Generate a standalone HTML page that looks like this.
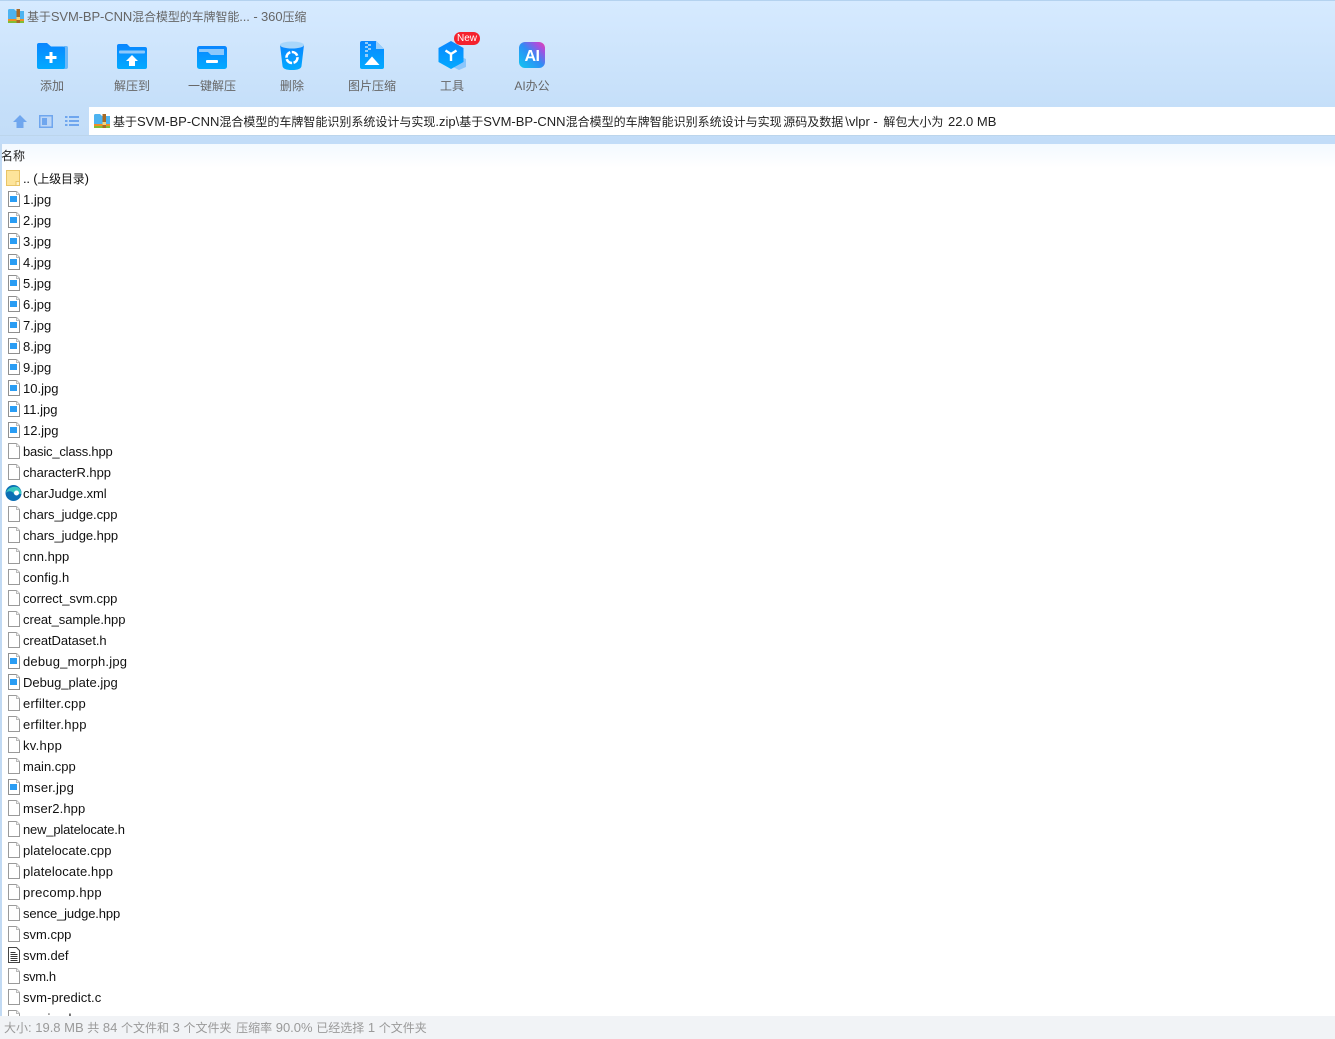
<!DOCTYPE html>
<html lang="zh-CN"><head><meta charset="utf-8"><title>360压缩</title>
<style>
html,body{margin:0;padding:0;width:1335px;height:1039px;overflow:hidden;background:#fff}
body{position:relative;font-family:"Liberation Sans","Noto Sans CJK SC",sans-serif;font-size:13px;color:#222}
.a{position:absolute;white-space:nowrap}
u{text-decoration:none;font-size:12px}
#top{left:0;top:0;width:1335px;height:144px;background:linear-gradient(#d6eaff 0,#c5dff9 106px,#c2dcf8 144px);border-top:1px solid #b4d2ef;box-sizing:border-box}
#bar{left:0;top:135px;width:1335px;height:1px;background:#bcd5ec}
#addr{left:89px;top:107px;width:1246px;height:28px;background:#fff}
#list{left:0;top:144px;width:1335px;height:24px;background:linear-gradient(#f3f9ff,#fff)}
#edge{left:0;top:144px;width:1.5px;height:872px;background:#c2daf3}
#status{left:0;top:1016px;width:1335px;height:23px;background:#f1f3f6}
#status span{position:absolute;left:4px;top:3px;color:#9a9a9a;line-height:17px;white-space:nowrap}
.lb{width:80px;text-align:center;top:77px;line-height:18px;color:#666;font-size:12px}
.r{position:absolute;left:23px;line-height:18px;white-space:nowrap;color:#111}
svg.i{position:absolute;left:7px;width:13px;height:16px}
svg.t{position:absolute;overflow:visible}
</style></head><body>
<svg width="0" height="0" style="position:absolute">
<defs>
<linearGradient id="b" x1="0" y1="0" x2="0" y2="1"><stop offset="0" stop-color="#0a86ff"/><stop offset="1" stop-color="#02aaff"/></linearGradient>
<g id="zip"><path d="M0 1.500Q0 0 1.500 0H6L8 2H16V12H0Z" fill="#4db3f0"/><rect y="10" width="16" height="2.200" fill="#f08f24"/><rect y="12" width="16" height="2" fill="#82bd35"/><rect x="8.500" y="0" width="3.500" height="14" fill="#a86a25"/><rect x="8.500" y="8" width="3.500" height="3" fill="#f5d27a"/></g>
<g id="f"><path d="M1.500.5H9.500L12.500 3.500V15.500H1.500Z" fill="#fff" stroke="#9a9a9a"/><path d="M9.500.5V3.500H12.500" fill="#f2f2f2" stroke="#bbb"/></g>
<g id="p"><path d="M1.500.5H9.500L12.500 3.500V15.500H1.500Z" fill="#fff" stroke="#8f8f8f"/><path d="M9.500.5V3.500H12.500" fill="#f2f2f2" stroke="#bbb"/><rect x="3" y="5" width="7" height="6" fill="#2a9df4"/></g>
</defs></svg>
<div class="a" id="top"></div><div class="a" id="bar"></div><div class="a" id="addr"></div><div class="a" id="list"></div><div class="a" id="edge"></div>

<svg class="t" style="left:8px;top:9px" width="16" height="14"><use href="#zip"/></svg>
<div class="a" style="left:27px;top:8px;line-height:18px;color:#666;letter-spacing:-.1px"><u>基于</u>SVM-BP-CNN<u>混合模型的车牌智能</u>... - 360<u>压缩</u></div>

<svg class="t" style="left:37px;top:43px" width="32" height="27"><path d="M27 3H29.500Q31 3 31 5V24Q31 26 29 26H26Z" fill="#6cb8f8"/><path d="M0 2Q0 0 2 0H10L14 3.500H26Q28 3.500 28 5.500V24Q28 26 26 26H2Q0 26 0 24Z" fill="url(#b)"/><path d="M12.500 9H15.500V13H19.500V16H15.500V20H12.500V16H8.500V13H12.500Z" fill="#fff"/></svg>
<svg class="t" style="left:117px;top:44px" width="30" height="26"><path d="M0 2Q0 0 2 0H10L13 3H28Q30 3 30 5V23Q30 25 28 25H2Q0 25 0 23Z" fill="url(#b)"/><rect x="2" y="6.500" width="26" height="3" rx="1" fill="#8cc8fb"/><path d="M15 11L21 17H18V22H12V17H9Z" fill="#fff"/></svg>
<svg class="t" style="left:197px;top:46px" width="30" height="24"><rect width="30" height="23" rx="2.500" fill="url(#b)"/><path d="M2 3H27V9H14L11 6H2Z" fill="#8cc8fb"/><rect x="9" y="14" width="12" height="3" rx="1" fill="#fff"/></svg>
<svg class="t" style="left:280px;top:41px" width="24" height="30"><path d="M0 4Q12 8 24 4L21.500 25Q21 29 12 29Q3 29 2.500 25Z" fill="url(#b)"/><ellipse cx="12" cy="4" rx="12" ry="3.500" fill="#a9d7fb"/><circle cx="12" cy="16.500" r="5.500" fill="none" stroke="#fff" stroke-width="2.600" stroke-dasharray="7 1.500"/></svg>
<svg class="t" style="left:360px;top:41px" width="24" height="28"><path d="M2 0H16L24 8V26Q24 28 22 28H2Q0 28 0 26V2Q0 0 2 0Z" fill="url(#b)"/><path d="M16 0L24 8H16Z" fill="#9ccffa"/><path d="M5 1h3v2H5zM8 3h3v2H8zM5 5h3v2H5zM8 7h3v2H8zM5 9h3v2H5zM5 13h3v3H5z" fill="#93cdfb"/><path d="M4.500 24L12 15.500L19.500 24Z" fill="#fff"/></svg>
<svg class="t" style="left:438px;top:41px" width="30" height="30"><path d="M21 15L28 18V26L21 29L15 26V18Z" fill="#8cc6fb"/><path d="M13 0L25.500 7V21L13 28L.5 21V7Z" fill="url(#b)"/><path d="M7.500 9.500L13 13L18.500 9.500M13 13V20" fill="none" stroke="#fff" stroke-width="2.400"/></svg>
<div class="a" style="left:454px;top:32px;width:26px;height:13px;border-radius:7px;background:#f5222d;color:#fff;font-size:10px;line-height:13px;text-align:center">New</div>
<svg class="t" style="left:519px;top:42px" width="26" height="26"><defs><linearGradient id="ai" x1="0" y1="1" x2="1" y2="0"><stop offset="0" stop-color="#10c8f0"/><stop offset=".5" stop-color="#2e8df5"/><stop offset=".8" stop-color="#a550e0"/><stop offset="1" stop-color="#f03fa5"/></linearGradient></defs><rect width="26" height="26" rx="6" fill="url(#ai)"/><text x="13" y="19" text-anchor="middle" fill="#fff" font-family="Liberation Sans" font-weight="bold" font-size="16" letter-spacing="-0.500">AI</text></svg>

<div class="a lb" style="left:12px">添加</div>
<div class="a lb" style="left:92px">解压到</div>
<div class="a lb" style="left:172px">一键解压</div>
<div class="a lb" style="left:252px">删除</div>
<div class="a lb" style="left:332px">图片压缩</div>
<div class="a lb" style="left:412px">工具</div>
<div class="a lb" style="left:492px">AI办公</div>

<svg class="t" style="left:13px;top:115px" width="14" height="13"><path d="M7 0L14 7H10.500V13H3.500V7H0Z" fill="#6fa6ee"/></svg>
<svg class="t" style="left:39px;top:115px" width="14" height="13"><rect x=".75" y=".75" width="12.500" height="11.500" fill="#bcd6f6" stroke="#6fa6ee" stroke-width="1.500"/><rect x="3" y="3" width="5" height="7" fill="#6fa6ee"/></svg>
<svg class="t" style="left:65px;top:116px" width="14" height="10"><path d="M0 0h2.500v2H0zM4 0h10v2H4zM0 4h2.500v2H0zM4 4h10v2H4zM0 8h2.500v2H0zM4 8h10v2H4z" fill="#6fa6ee"/></svg>

<svg class="t" style="left:94px;top:114px" width="16" height="14"><use href="#zip"/></svg>
<div class="a" style="left:113px;top:113px;line-height:18px;color:#222"><u>基于</u>SVM-BP-CNN<u>混合模型的车牌智能识别系统设计与实现</u>.zip\<u>基于</u>SVM-BP-CNN<u>混合模型的车牌智能识别系统设计与实现</u> <u style="margin-left:-2px">源码及数据</u><span style="margin-left:2px">\vlpr</span> - <u style="margin-left:2px">解包大小为</u><span style="margin-left:1px"> 22.0 MB</span></div>

<div class="a" style="left:1px;top:147px;line-height:18px;color:#222;font-size:12px">名称</div>

<div style="position:absolute;left:0;top:0;width:1335px;height:1016px;overflow:hidden">
<svg class="i" style="top:170px;left:6px;width:14px" viewBox="0 0 14 16"><path d="M.5.500H13.500V15.500H.5Z" fill="#fde49a" stroke="#e9c466"/><path d="M10 11.500H13.500V15.500H10Z" fill="#fff3c8" stroke="#e9c466"/></svg><div class="r" style="top:170px;letter-spacing:-.2px">.. (<u>上级目录</u>)</div>
<svg class="i" style="top:191px"><use href="#p"/></svg><div class="r" style="top:191px">1.jpg</div>
<svg class="i" style="top:212px"><use href="#p"/></svg><div class="r" style="top:212px">2.jpg</div>
<svg class="i" style="top:233px"><use href="#p"/></svg><div class="r" style="top:233px">3.jpg</div>
<svg class="i" style="top:254px"><use href="#p"/></svg><div class="r" style="top:254px">4.jpg</div>
<svg class="i" style="top:275px"><use href="#p"/></svg><div class="r" style="top:275px">5.jpg</div>
<svg class="i" style="top:296px"><use href="#p"/></svg><div class="r" style="top:296px">6.jpg</div>
<svg class="i" style="top:317px"><use href="#p"/></svg><div class="r" style="top:317px">7.jpg</div>
<svg class="i" style="top:338px"><use href="#p"/></svg><div class="r" style="top:338px">8.jpg</div>
<svg class="i" style="top:359px"><use href="#p"/></svg><div class="r" style="top:359px">9.jpg</div>
<svg class="i" style="top:380px"><use href="#p"/></svg><div class="r" style="top:380px">10.jpg</div>
<svg class="i" style="top:401px"><use href="#p"/></svg><div class="r" style="top:401px">11.jpg</div>
<svg class="i" style="top:422px"><use href="#p"/></svg><div class="r" style="top:422px">12.jpg</div>
<svg class="i" style="top:443px"><use href="#f"/></svg><div class="r" style="top:443px;letter-spacing:-.2px">basic_class.hpp</div>
<svg class="i" style="top:464px"><use href="#f"/></svg><div class="r" style="top:464px;letter-spacing:-.07px">characterR.hpp</div>
<svg class="i" style="top:485px;left:5px;width:17px" viewBox="0 0 17 16"><circle cx="8.500" cy="8" r="8" fill="#0c6fb5"/><path d="M1 8C2 3 9 0 14 3C16 5 16.500 7 16.500 9H9C8 6 3 5 1 8Z" fill="#38c6c0"/><path d="M7 9C7 12 11 14 15 12C14 9.500 16.500 9 16.500 9H9Z" fill="#0c6fb5"/><circle cx="11.500" cy="8" r="2.500" fill="#fff"/></svg><div class="r" style="top:485px;letter-spacing:-.07px">charJudge.xml</div>
<svg class="i" style="top:506px"><use href="#f"/></svg><div class="r" style="top:506px;letter-spacing:-.07px">chars_judge.cpp</div>
<svg class="i" style="top:527px"><use href="#f"/></svg><div class="r" style="top:527px;letter-spacing:-.07px">chars_judge.hpp</div>
<svg class="i" style="top:548px"><use href="#f"/></svg><div class="r" style="top:548px">cnn.hpp</div>
<svg class="i" style="top:569px"><use href="#f"/></svg><div class="r" style="top:569px;letter-spacing:.1px">config.h</div>
<svg class="i" style="top:590px"><use href="#f"/></svg><div class="r" style="top:590px;letter-spacing:-.07px">correct_svm.cpp</div>
<svg class="i" style="top:611px"><use href="#f"/></svg><div class="r" style="top:611px;letter-spacing:-.06px">creat_sample.hpp</div>
<svg class="i" style="top:632px"><use href="#f"/></svg><div class="r" style="top:632px;letter-spacing:-.07px">creatDataset.h</div>
<svg class="i" style="top:653px"><use href="#p"/></svg><div class="r" style="top:653px;letter-spacing:.2px">debug_morph.jpg</div>
<svg class="i" style="top:674px"><use href="#p"/></svg><div class="r" style="top:674px">Debug_plate.jpg</div>
<svg class="i" style="top:695px"><use href="#f"/></svg><div class="r" style="top:695px;letter-spacing:.25px">erfilter.cpp</div>
<svg class="i" style="top:716px"><use href="#f"/></svg><div class="r" style="top:716px;letter-spacing:.25px">erfilter.hpp</div>
<svg class="i" style="top:737px"><use href="#f"/></svg><div class="r" style="top:737px;letter-spacing:.3px">kv.hpp</div>
<svg class="i" style="top:758px"><use href="#f"/></svg><div class="r" style="top:758px">main.cpp</div>
<svg class="i" style="top:779px"><use href="#p"/></svg><div class="r" style="top:779px;letter-spacing:.25px">mser.jpg</div>
<svg class="i" style="top:800px"><use href="#f"/></svg><div class="r" style="top:800px;letter-spacing:.1px">mser2.hpp</div>
<svg class="i" style="top:821px"><use href="#f"/></svg><div class="r" style="top:821px;letter-spacing:-.18px">new_platelocate.h</div>
<svg class="i" style="top:842px"><use href="#f"/></svg><div class="r" style="top:842px;letter-spacing:.07px">platelocate.cpp</div>
<svg class="i" style="top:863px"><use href="#f"/></svg><div class="r" style="top:863px;letter-spacing:.13px">platelocate.hpp</div>
<svg class="i" style="top:884px"><use href="#f"/></svg><div class="r" style="top:884px;letter-spacing:.27px">precomp.hpp</div>
<svg class="i" style="top:905px"><use href="#f"/></svg><div class="r" style="top:905px;letter-spacing:-.13px">sence_judge.hpp</div>
<svg class="i" style="top:926px"><use href="#f"/></svg><div class="r" style="top:926px">svm.cpp</div>
<svg class="i" style="top:947px"><path d="M1.500.5H9.500L12.500 3.500V15.500H1.500Z" fill="#fff" stroke="#444"/><path d="M3.500 5.500h5M3.500 7.500h7M3.500 9.500h7M3.500 11.500h7M3.500 13.500h7" stroke="#333" stroke-width="1"/></svg><div class="r" style="top:947px">svm.def</div>
<svg class="i" style="top:968px"><use href="#f"/></svg><div class="r" style="top:968px;letter-spacing:-.4px">svm.h</div>
<svg class="i" style="top:989px"><use href="#f"/></svg><div class="r" style="top:989px;letter-spacing:.08px">svm-predict.c</div>
<svg class="i" style="top:1010px"><use href="#f"/></svg><div class="r" style="top:1010px">version.h</div>
</div>

<div class="a" id="status"><span><u>大小</u>: 19.8 MB <u>共</u> 84 <u>个文件和</u> 3 <u>个文件夹</u> <u style="margin-left:1px">压缩率</u> 90.0% <u>已经选择</u> 1 <u>个文件夹</u></span></div>
</body></html>
